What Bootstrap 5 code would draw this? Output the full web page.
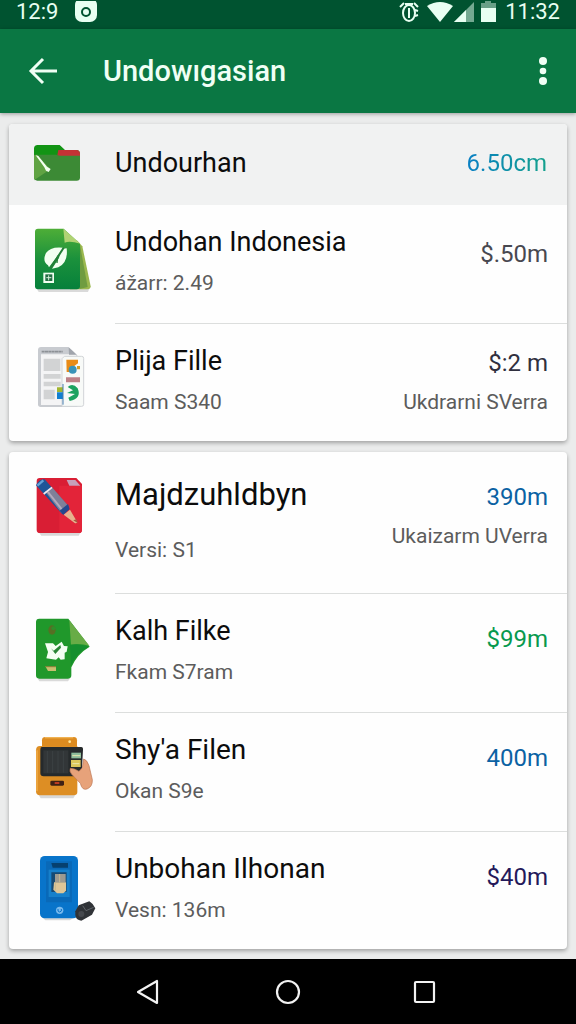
<!DOCTYPE html>
<html lang="id">
<head>
<meta charset="utf-8">
<meta name="viewport" content="width=device-width, initial-scale=1">
<title>Undowıgasian</title>
<link href="https://cdn.jsdelivr.net/npm/bootstrap@5.3.0/dist/css/bootstrap.min.css" rel="stylesheet">
<script src="https://cdn.jsdelivr.net/npm/bootstrap@5.3.0/dist/js/bootstrap.bundle.min.js" defer></script>
<style>
body { font-family: Roboto, "Noto Sans", sans-serif; background: #ebecec; color: #0c0c0c; }
svg { display: block; flex: none; }
.status-bar { background: #005330; color: #e8fff2; height: 29px; padding: 0 16px 5px; font-size: 22px; line-height: 24px; }
.app-bar { background: #0a7743; color: #f0fff5; height: 84px; padding: 0 16px; box-shadow: 0 1px 4px rgba(0,0,0,.35); }
.app-bar h1 { font-size: 29px; line-height: 36px; font-weight: 500; margin-left: 44px; }
.icon-btn { background: none; border: 0; padding: 0; color: inherit; }
.content { padding: 11px 9px 8px; gap: 11px; }
.sheet { background: #fefefe; border-radius: 4px; box-shadow: 0 2px 4px rgba(0,0,0,.32); overflow: hidden; }
.sheet-head { background: #f1f2f2; padding: 0 20px 4px 24px; height: 81px; }
.sheet-head .name { margin-left: 34px; }
.entry { padding-left: 24px; }
.entry > svg { margin: 19px 18px 0 0; }
.entry-body { padding: 19px 19px 25px 0; border-bottom: 1px solid #dcdedd; }
.entry:last-child .entry-body { border-bottom: 0; padding-bottom: 24px; }
.entry-tall > svg { margin-top: 22px; }
.entry-tall .entry-body { padding: 25px 19px 28px 0; }
.entry-tall .left-col { gap: 22px; }
.entry-tall .name { font-size: 31px; }
.pair { gap: 8px; }
.text-end.pair { padding-top: 2px; gap: 6px; }
.name { font-size: 28px; line-height: 36px; font-weight: 400; margin: 0; }
.name-long { font-size: 27px; }
.detail { font-size: 21px; line-height: 30px; color: #5c5c5c; margin: 0; }
.amount { font-size: 24px; line-height: 36px; margin: 0; }
.solo { margin-top: 8px; }
.c-grey { color: #484850; } .c-ink { color: #30303e; } .c-blue { color: #0b62a3; }
.c-green { color: #08994e; } .c-violet { color: #24195a; }
.c-fade { background: linear-gradient(90deg, #087fc4, #14a18c); -webkit-background-clip: text; background-clip: text; color: transparent; }
.nav-bar { background: #000; color: #f2f2f2; height: 65px; gap: 112px; }
</style>
</head>
<body class="min-vh-100 d-flex flex-column">
<div class="status-bar d-flex align-items-center justify-content-between">
  <div class="d-flex align-items-center gap-3">
    <span>12:9</span>
    <svg width="24" height="22" viewBox="0 0 24 22"><rect x="1" y="-3" width="22" height="24" rx="7" fill="currentColor"/><circle cx="12" cy="11" r="4" fill="none" stroke="#005330" stroke-width="2"/></svg>
  </div>
  <div class="d-flex align-items-center gap-2">
    <svg width="20" height="22" viewBox="0 0 20 22" fill="none" stroke="currentColor" stroke-width="2"><ellipse cx="10" cy="12" rx="6" ry="8"/><path d="M10 7v10M1 6l4-4M19 6l-4-4M6 3h8M16 9l3 1M16 15l3-1"/></svg>
    <svg width="70" height="22" viewBox="0 0 70 22" fill="currentColor"><path d="M0 5Q13-3 26 5L13 21Z"/><path d="M27 21 47 1V21Z" opacity=".5"/><path d="M27 21 39 9V21Z"/><path d="M58 0h6v2h5v5H54V2h4Z" opacity=".45"/><path d="M54 7h15v14H54Z"/></svg>
    <span>11:32</span>
  </div>
</div>
<header class="app-bar d-flex align-items-center">
  <button class="icon-btn ms-2 ps-1" aria-label="Kembali"><svg width="31" height="28" viewBox="0 0 31 28" fill="none" stroke="currentColor" stroke-width="3"><path d="M29 14H4M15 2 3 14 15 26"/></svg></button>
  <h1 class="mb-0 flex-grow-1">Undowıgasian</h1>
  <button class="icon-btn me-2" aria-label="Menu"><svg width="18" height="28" viewBox="0 0 18 28" fill="currentColor"><circle cx="9" cy="4" r="4"/><circle cx="9" cy="14" r="3.3"/><circle cx="9" cy="24" r="4"/></svg></button>
</header>
<main class="content flex-grow-1 d-flex flex-column">
  <section class="sheet">
    <div class="sheet-head d-flex align-items-center">
      <svg width="48" height="38" viewBox="0 0 144 114"><path d="M3 14Q3 3 14 3H80L96 18H130Q141 18 141 30V96H3Z" fill="#129414"/><path d="M76 18H130Q141 18 141 30V40H72Z" fill="#c43235"/><path d="M3 32H70L80 35H141V101Q141 110 131 110H13Q3 110 3 100Z" fill="#3c8a35"/><path d="M4 108 52 76 12 32 3 34V100Q3 106 6 109Z" fill="#60a343"/><path d="M8 34 16 36 42 68 53 75 47 84 39 80 34 70Z" fill="#f4fff1"/></svg>
      <h2 class="name name-long flex-grow-1">Undourhan</h2>
      <p class="amount c-fade">6.50cm</p>
    </div>
    <ul class="list-unstyled mb-0">
      <li class="entry d-flex">
        <svg width="64" height="72" viewBox="39 27 192 216"><defs><linearGradient id="g1" x1="0" y1="0" x2="0" y2="1"><stop offset="0" stop-color="#4eae37"/><stop offset=".5" stop-color="#1b913c"/><stop offset="1" stop-color="#06803b"/></linearGradient></defs><path d="M50 221H208L204 231H56Z" fill="#000" opacity=".14"/><path d="M170 75 187 94 212 214Q212 223 202 223H150Z" fill="#9bb84f"/><path d="M180 90 203 216 178 222Z" fill="#6f9c40"/><path d="M54 41H131L180 86V214Q180 223 170 223H54Q45 223 45 214V50Q45 41 54 41Z" fill="url(#g1)"/><path d="M130 41 181 86Q150 77 134 83Z" fill="#b0d273"/><path d="M84 151Q66 139 78 114 91 94 129 98L116 119 107 130 87 157Z" fill="#f3fff1"/><path d="M96 161 117 129 123 102 140 100Q145 143 115 157Z" fill="#f3fff1"/><path d="M92 159 131 98" stroke="#237e36" stroke-width="6"/><path d="M111 144 113 122" stroke="#237e36" stroke-width="4"/><rect x="70" y="173" width="32" height="31" fill="#effff0"/><rect x="76" y="178" width="21" height="20" fill="#226d43"/><path d="M86 181V196M79 188H94" stroke="#d6efd9" stroke-width="3"/></svg>
        <div class="entry-body flex-grow-1 d-flex justify-content-between">
          <div class="d-flex flex-column pair"><h3 class="name name-long">Undohan Indonesia</h3><p class="detail">ážarr: 2.49</p></div>
          <p class="amount c-grey solo pt-1">$.50m</p>
        </div>
      </li>
      <li class="entry d-flex">
        <svg width="64" height="72" viewBox="39 27 192 216"><path d="M54 48Q54 39 63 39H145L172 64V219H62Q54 219 54 211Z" fill="#c8cbd0"/><path d="M63 61H169V213H63Z" fill="#f4f4f5"/><path d="M65 53H128" stroke="#8d9196" stroke-width="5" stroke-dasharray="9 1"/><path d="M146 40 147 62H170Z" fill="#a1a5ac"/><g fill="#d2d3d4"><path d="M71 74H121V111H71ZM71 120H122V134H71ZM71 143H122V157H71ZM71 167H104V196H71Z"/></g><path d="M133 67H185Q191 67 191 73V211Q191 217 185 217H126V74Z" fill="#f8faf8" stroke="#d1d4d7" stroke-width="3"/><path d="M139 77H174V88L160 98 150 114H140Z" fill="#e88b17"/><circle cx="158" cy="107" r="12" fill="#3993b8"/><path d="M171 96H180V106H171Z" fill="#d49b27"/><path d="M138 130H180V145H138Z" fill="#be8188"/><path d="M143 159Q158 145 173 163 186 194 149 201L145 191 165 180 141 177 159 169Z" fill="#1ca260"/><path d="M111 160H129V174H111Z" fill="#a3b630"/><path d="M111 175H129V195H111Z" fill="#127fd0"/><path d="M129 150V212" stroke="#477db0" stroke-width="3"/></svg>
        <div class="entry-body flex-grow-1 d-flex justify-content-between">
          <div class="d-flex flex-column pair"><h3 class="name name-long">Plija Fille</h3><p class="detail">Saam S340</p></div>
          <div class="d-flex flex-column pair text-end"><p class="amount c-ink">$:2 m</p><p class="detail">Ukdrarni SVerra</p></div>
        </div>
      </li>
    </ul>
  </section>
  <section class="sheet">
    <ul class="list-unstyled mb-0">
      <li class="entry entry-tall d-flex">
        <svg width="64" height="72" viewBox="39 27 192 216"><path d="M56 202H182L176 212H64Z" fill="#000" opacity=".15"/><path d="M59 39H169L186 57V194Q186 204 176 204H60Q50 204 50 194V48Q50 39 59 39Z" fill="#d91e34"/><path d="M118 62H186V194Q186 204 176 204H118Z" fill="#e32439"/><path d="M140 45H166L181 62H148Z" fill="#c6a1ba"/><path d="M48 61Q58 40 74 43L147 126 127 148Z" fill="#1e5598"/><path d="M76 80 96 67 146 124 125 145Z" fill="#7f8099"/><path d="M84 81 130 139" stroke="#b2aabd" stroke-width="6"/><path d="M71 87 96 67" stroke="#f0e8f0" stroke-width="5"/><path d="M52 62 70 46" stroke="#64a1d8" stroke-width="7"/><path d="M119 137 144 117 149 132 130 150Z" fill="#24488d"/><path d="M131 149 150 134 172 172Q168 177 163 173Z" fill="#e6b28e"/><path d="M160 166 169 163 173 174Z" fill="#a5563f"/></svg>
        <div class="entry-body flex-grow-1 d-flex justify-content-between">
          <div class="left-col d-flex flex-column"><h3 class="name">Majdzuhldbyn</h3><p class="detail">Versi: S1</p></div>
          <div class="d-flex flex-column pair text-end"><p class="amount c-blue">390m</p><p class="detail">Ukaizarm UVerra</p></div>
        </div>
      </li>
      <li class="entry d-flex">
        <svg width="64" height="72" viewBox="39 27 192 216"><path d="M52 222H151L144 232H58Z" fill="#000" opacity=".14"/><path d="M58 44H145L209 128Q171 150 154 190V214Q154 224 144 224H58Q48 224 48 214V54Q48 44 58 44Z" fill="#20982b"/><path d="M148 49 208 125Q180 118 153 122Z" fill="#68ac46"/><path d="M150 122Q181 117 206 128 169 146 153 184Z" fill="#158f2e"/><ellipse cx="96" cy="78" rx="11" ry="14" fill="#576f24"/><circle cx="100" cy="73" r="6" fill="#318e2b"/><path d="M75 118H99L107 126 125 113 132 126 143 127 140 143 134 146 134 166 122 167 116 160 108 167 79 163 84 144Z" fill="#f4fff2"/><path d="M93 133 101 140 121 123 123 131 106 150Z" fill="#298534"/><path d="M76 187H108V201H84Z" fill="#c7bf70"/><path d="M76 188H108" stroke="#817c32" stroke-width="3"/></svg>
        <div class="entry-body flex-grow-1 d-flex justify-content-between">
          <div class="d-flex flex-column pair"><h3 class="name name-long">Kalh Filke</h3><p class="detail">Fkam S7ram</p></div>
          <p class="amount c-green solo">$99m</p>
        </div>
      </li>
      <li class="entry d-flex">
        <svg width="64" height="72" viewBox="39 27 192 216"><path d="M54 213H168L160 226H62Z" fill="#000" opacity=".15"/><rect x="66" y="42" width="105" height="50" rx="10" fill="#dc8b20"/><path d="M75 44H160" stroke="#f0b253" stroke-width="4"/><circle cx="149" cy="56" r="4" fill="#ffe69b"/><path d="M60 69H172V207Q172 217 160 217H60Q48 217 48 205V82Q48 69 60 69Z" fill="#dd8e24"/><path d="M51 82V205" stroke="#f2af4b" stroke-width="4"/><path d="M65 72H184Q190 72 189 80L185 152Q184 160 174 160H71Q61 160 61 151V80Q61 72 65 72Z" fill="#262a2c"/><path d="M70 82H145V151H70Z" fill="#323638"/><path d="M82 84V149M98 84V149M114 84V149M130 84V149" stroke="#41474a" stroke-width="2"/><path d="M154 89H183V106H154Z" fill="#8dbc9b"/><path d="M153 111H182V132H153Z" fill="#dbc65b"/><path d="M157 98H181M157 122H178" stroke="#e9e8b0" stroke-width="3"/><path d="M151 136Q161 135 177 145L187 134 191 108Q201 110 207 128L217 170Q218 190 203 197 187 205 181 181L155 154Q147 145 151 136Z" fill="#e7a27a" stroke="#bb7451" stroke-width="2"/><rect x="91" y="173" width="41" height="15" rx="4" fill="#3e2115"/><path d="M104 180H118" stroke="#ba3b22" stroke-width="6"/></svg>
        <div class="entry-body flex-grow-1 d-flex justify-content-between">
          <div class="d-flex flex-column pair"><h3 class="name">Shy'a Filen</h3><p class="detail">Okan S9e</p></div>
          <p class="amount c-blue solo">400m</p>
        </div>
      </li>
      <li class="entry d-flex">
        <svg width="64" height="72" viewBox="39 27 192 216"><path d="M65 224H166L150 235H76Z" fill="#000" opacity=".15"/><rect x="60" y="42" width="114" height="187" rx="14" fill="#0874ca"/><path d="M78 58H156V181H78Z" fill="#0969b8"/><path d="M94 63H144V77H98Z" fill="#06406f"/><rect x="86" y="83" width="63" height="82" fill="#1680cb"/><path d="M94 91H140V150H94Z" fill="#154a75"/><path d="M105 96H137V121H105Z" fill="#9c9a91"/><path d="M102 121H138V146L130 154H111L100 143Z" fill="#dec697"/><path d="M119 96V121M106 122V145" stroke="#c7b891" stroke-width="3"/><circle cx="119" cy="205" r="11" fill="#78b9ed"/><path d="M114 201V207Q119 213 124 207V201" fill="none" stroke="#0872c8" stroke-width="3"/><path d="M166 208 176 190 208 178Q220 185 226 199L216 218 184 236Q167 234 166 219Z" fill="#303337"/><path d="M188 191 198 206 221 196" fill="none" stroke="#606469" stroke-width="3"/><circle cx="184" cy="216" r="9" fill="#46494e"/></svg>
        <div class="entry-body flex-grow-1 d-flex justify-content-between">
          <div class="d-flex flex-column pair"><h3 class="name">Unbohan Ilhonan</h3><p class="detail">Vesn: 136m</p></div>
          <p class="amount c-violet solo">$40m</p>
        </div>
      </li>
    </ul>
  </section>
</main>
<nav class="nav-bar d-flex align-items-center justify-content-center" aria-label="Navigasi">
  <button class="icon-btn" aria-label="Kembali"><svg width="26" height="28" viewBox="0 0 26 28" fill="none" stroke="currentColor" stroke-width="2.2"><path d="M20 3V25L1 14Z" stroke-linejoin="round"/></svg></button>
  <button class="icon-btn" aria-label="Beranda"><svg width="26" height="28" viewBox="0 0 26 28" fill="none" stroke="currentColor" stroke-width="2.2"><circle cx="13" cy="14" r="11"/></svg></button>
  <button class="icon-btn" aria-label="Terbaru"><svg width="26" height="28" viewBox="0 0 26 28" fill="none" stroke="currentColor" stroke-width="2.2"><rect x="2" y="4" width="19" height="20" rx="1"/></svg></button>
</nav>
</body>
</html>
